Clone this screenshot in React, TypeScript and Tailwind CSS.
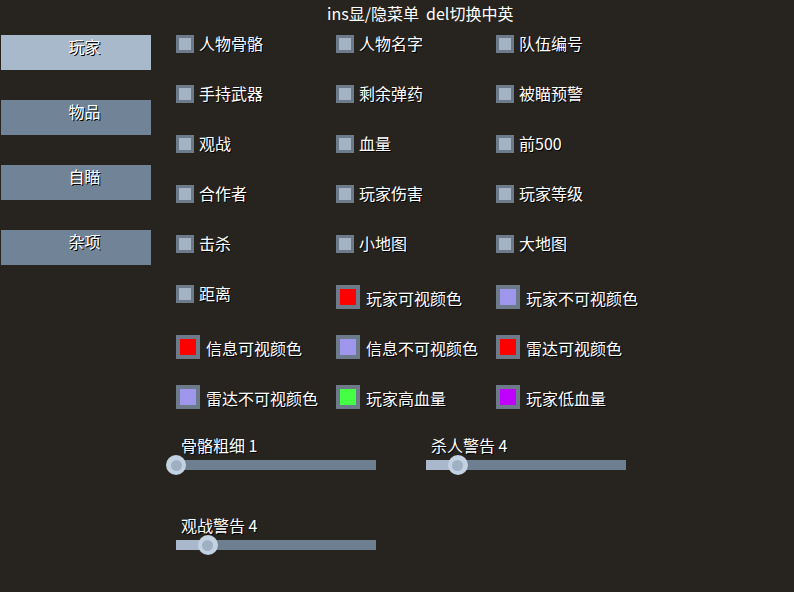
import React from "react";

const font = "font-['Microsoft_YaHei','Noto_Sans_CJK_SC',sans-serif]";
const shadow = "[text-shadow:1px_1px_0_#000]";

type Item = { label: string; color?: string };

const rows: Item[][] = [
  [{ label: "人物骨骼" }, { label: "人物名字" }, { label: "队伍编号" }],
  [{ label: "手持武器" }, { label: "剩余弹药" }, { label: "被瞄预警" }],
  [{ label: "观战" }, { label: "血量" }, { label: "前500" }],
  [{ label: "合作者" }, { label: "玩家伤害" }, { label: "玩家等级" }],
  [{ label: "击杀" }, { label: "小地图" }, { label: "大地图" }],
  [
    { label: "距离" },
    { label: "玩家可视颜色", color: "#ff0000" },
    { label: "玩家不可视颜色", color: "#9f97ee" },
  ],
  [
    { label: "信息可视颜色", color: "#ff0000" },
    { label: "信息不可视颜色", color: "#9f97ee" },
    { label: "雷达可视颜色", color: "#ff0000" },
  ],
  [
    { label: "雷达不可视颜色", color: "#9f97ee" },
    { label: "玩家高血量", color: "#44ff44" },
    { label: "玩家低血量", color: "#c000ff" },
  ],
];

const tabs = ["玩家", "物品", "自瞄", "杂项"];

function Cell({ item }: { item: Item }) {
  return (
    <div className="w-[160px] h-[50px] flex items-start">
      {item.color ? (
        <div className="flex items-center gap-[6px]">
          <div className="w-[24px] h-[24px] bg-[#6c7a8a] p-[4px]">
            <div className="w-full h-full" style={{ backgroundColor: item.color }} />
          </div>
          <span className={`text-[16px] leading-[20px] text-white ${shadow} mt-[1px]`}>{item.label}</span>
        </div>
      ) : (
        <div className="flex items-center gap-[5px]">
          <div className="w-[18px] h-[18px] bg-[#6c7a8a] p-[3px]">
            <div className="w-full h-full bg-[#a3b3c4]" />
          </div>
          <span className={`text-[16px] leading-[20px] text-white ${shadow} mt-[-2px]`}>{item.label}</span>
        </div>
      )}
    </div>
  );
}

function Slider({ label, value }: { label: string; value: number }) {
  const pos = ((value - 1) / 19) * 200;
  return (
    <div className="w-[200px]">
      <div className={`pl-[5px] h-[22px] text-[16px] leading-[20px] text-white ${shadow}`}>{label}</div>
      <div className="relative h-[10px] mt-[3px] bg-[#6e7f91]">
        <div className="absolute left-0 top-0 h-full bg-[#a9b8cc]" style={{ width: pos }} />
        <div
          className="absolute top-[-5px] w-[20px] h-[20px] rounded-full bg-[#c3d2e2] flex items-center justify-center"
          style={{ left: pos - 10 }}
        >
          <div className="w-[11px] h-[11px] rounded-full bg-[#9fb0c3]" />
        </div>
      </div>
    </div>
  );
}

export default function App() {
  return (
    <div className={`w-[794px] h-[592px] bg-[#27241f] overflow-hidden ${font}`}>
      <div className={`h-[35px] pl-[327px] pt-[2px] text-[16px] leading-[22px] text-white`}>
        ins显/隐菜单&nbsp;&nbsp;del切换中英
      </div>
      <div className="flex">
        <div className="w-[176px] pl-[1px] flex flex-col gap-[30px]">
          {tabs.map((t, i) => (
            <div
              key={t}
              className={`w-[150px] h-[35px] flex justify-center pt-[1px] pl-[17px] text-[16px] leading-[20px] text-white ${shadow} ${
                i === 0 ? "bg-[#a9b9cc]" : "bg-[#718396]"
              }`}
            >
              {t}
            </div>
          ))}
        </div>
        <div className="flex flex-col">
          {rows.map((r, i) => (
            <div key={i} className="flex">
              {r.map((it) => (
                <Cell key={it.label} item={it} />
              ))}
            </div>
          ))}
          <div className="flex gap-[50px]">
            <Slider label="骨骼粗细 1" value={1} />
            <Slider label="杀人警告 4" value={4} />
          </div>
          <div className="mt-[45px] flex">
            <Slider label="观战警告 4" value={4} />
          </div>
        </div>
      </div>
    </div>
  );
}
